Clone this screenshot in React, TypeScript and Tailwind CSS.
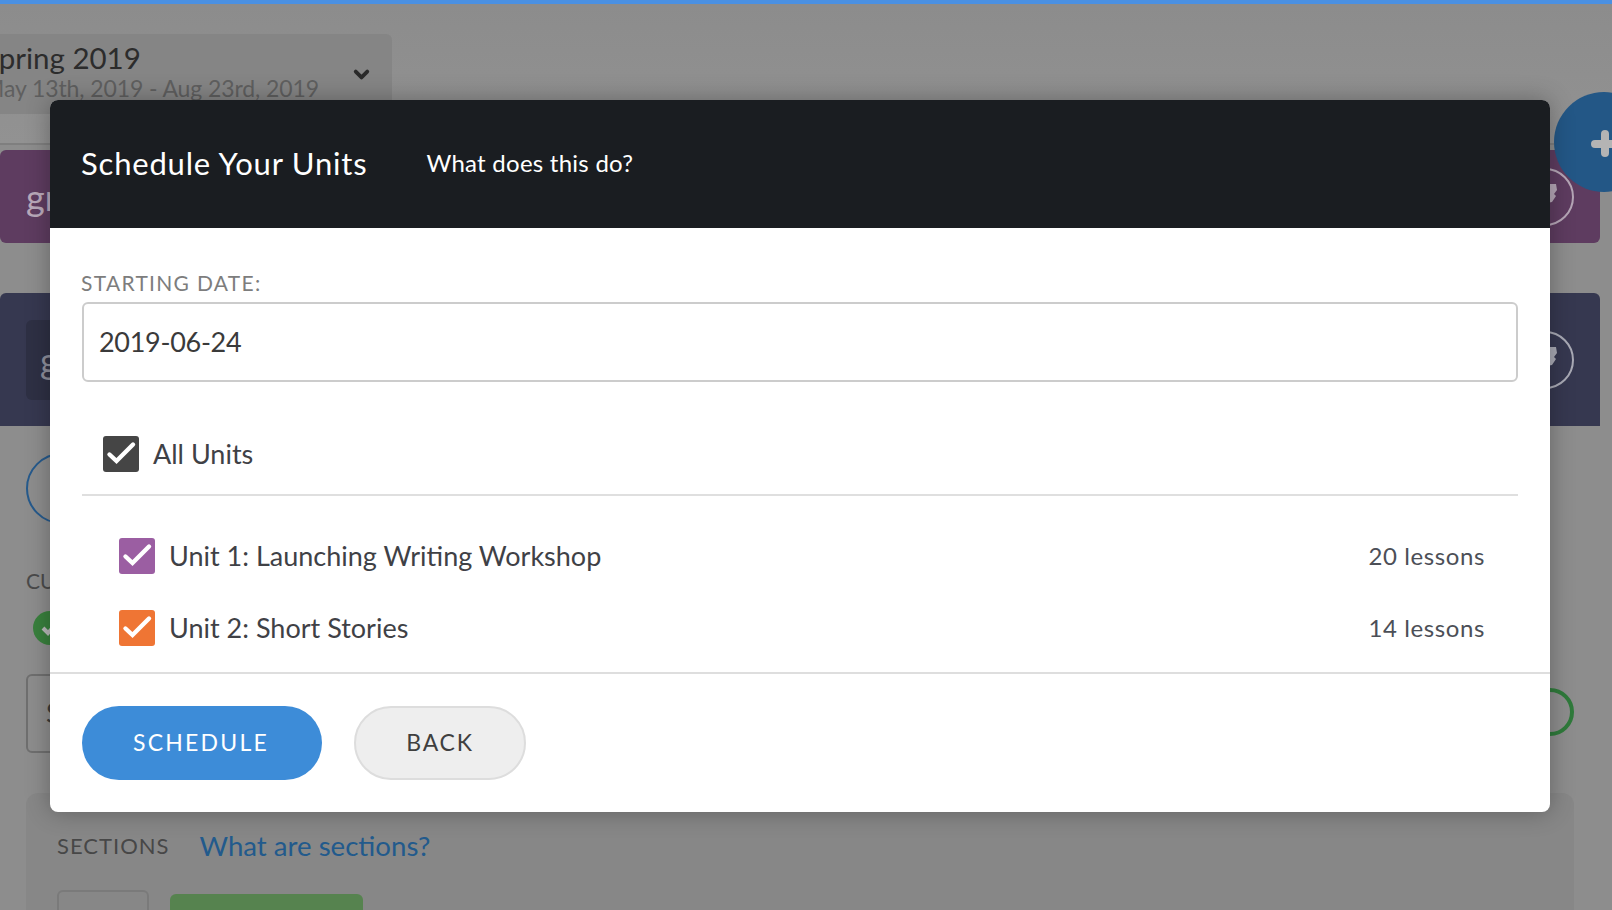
import React from 'react'
import { ChevronDown } from 'lucide-react'

const font = { fontFamily: '"Lato", "Open Sans", sans-serif' }

const Box = ({ color }: { color: string }) => (
  <span className={`block h-[36px] w-[36px] shrink-0 rounded-[3px] ${color}`}>
    <svg width="36" height="36" viewBox="0 0 36 36" fill="none">
      <path d="M6.5 18.5 L13.5 25 L30 8.5" stroke="white" strokeWidth="4.4" strokeLinecap="round" />
    </svg>
  </span>
)

const UnitRow = ({ name, count, color }: { name: string; count: string; color: string }) => (
  <div className="flex h-[36px] items-center pl-[37px] pr-[33px]">
    <Box color={color} />
    <span className="ml-[14px] text-[27px] text-[#3f4146]">{name}</span>
    <span className="ml-auto text-[24px] tracking-[0.6px] text-[#4c4f57]">{count}</span>
  </div>
)

const PinCircle = ({ border, fill }: { border: string; fill: string }) => (
  <span className={`flex h-[58px] w-[58px] items-center justify-center rounded-full border-2 ${border}`}>
    <svg width="26" height="26" viewBox="0 0 26 26" className={fill}>
      <path d="M10 0 L24 0 L25 6 L22 10 L24 12 L20 18 L10 20 Z" fill="currentColor" />
    </svg>
  </span>
)

const Background = () => (
  <div className="flex h-[910px] flex-col bg-[#8d8d8d]">
    <div className="h-[4px] shrink-0 bg-[#4a90e2]" />
    <div className="h-[141px] shrink-0 border-b-2 border-[#7f7f7f] bg-gradient-to-b from-[#8c8c8c] to-[#929292] pt-[30px]">
      <div className="flex h-[80px] w-[392px] items-center justify-between rounded-r-md bg-[#858585] pr-[19px]">
        <div className="ml-[-17px] mt-[-6px] whitespace-nowrap">
          <div className="text-[29.5px] leading-[34px] text-[#2c2c2c]">Spring 2019</div>
          <div className="text-[23px] leading-[26px] tracking-[-0.1px] text-[#5f5f5f]">May 13th, 2019 - Aug 23rd, 2019</div>
        </div>
        <ChevronDown size={23} strokeWidth={4} className="text-[#2a2a2a]" />
      </div>
    </div>
    <div className="mt-[5px] flex h-[93px] w-[1600px] shrink-0 items-center justify-between rounded-b-md rounded-tl-md bg-[#5e3c60] pl-[26px] pr-[26px]">
      <span className="text-[36px] text-[#b9a9ba]">gr</span>
      <PinCircle border="border-[#b5a6b6]" fill="text-[#b5a6b6]" />
    </div>
    <div className="mt-[50px] flex h-[133px] w-[1600px] shrink-0 items-center justify-between rounded-t-md bg-[#363850] pl-[26px] pr-[26px]">
      <div className="flex h-[80px] w-[60px] items-center rounded-md bg-[#2e3044] pl-[14px]">
        <span className="text-[36px] text-[#8d8e9b]">g</span>
      </div>
      <PinCircle border="border-[#a9aab5]" fill="text-[#a9aab5]" />
    </div>
    <div className="w-[1574px] flex-1 pl-[26px]">
      <div className="mt-[27px] h-[71px] w-[71px] rounded-full border-2 border-[#265a8c]" />
      <div className="mt-[45px] text-[21px] leading-[24px] text-[#4a4a4a]">CU</div>
      <div className="ml-[7px] mt-[18px] flex h-[34px] w-[34px] items-center justify-center rounded-full bg-[#39803d]">
        <svg width="22" height="22" viewBox="0 0 22 22" fill="none">
          <path d="M4 11 L9 16 L18 6" stroke="#b9b9b9" strokeWidth="4" />
        </svg>
      </div>
      <div className="mt-[29px] flex items-start justify-between">
        <div className="flex h-[79px] w-[60px] items-center rounded-md border-2 border-[#6f6f6f] pl-[18px] text-[27px] text-[#3a3a3a]">
          S
        </div>
        <div className="mt-[14px] h-[48px] w-[48px] rounded-full border-[4px] border-[#2f7a3b]" />
      </div>
      <div className="mt-[40px] h-[140px] rounded-t-xl bg-[#878787] pl-[31px] pt-[32px]">
        <div className="flex items-center">
          <span className="text-[22px] tracking-[1px] text-[#474747]">SECTIONS</span>
          <span className="ml-[30px] text-[27.6px] text-[#225a8c]">What are sections?</span>
        </div>
        <div className="mt-[24px] flex items-start">
          <div className="h-[40px] w-[92px] rounded-md border-2 border-[#7a7a7a]" />
          <div className="ml-[21px] mt-[4px] h-[40px] w-[193px] rounded-md bg-[#56834f]" />
        </div>
      </div>
    </div>
  </div>
)

export default function App() {
  return (
    <div className="relative h-[910px] w-[1612px] overflow-hidden" style={font}>
      <Background />

      <button className="absolute left-[1554px] top-[92px] h-[100px] w-[100px] rounded-full bg-[#235786]">
        <span className="absolute left-[37px] top-[48px] h-[8px] w-[27px] rounded-sm bg-[#b4b4b4]" />
        <span className="absolute left-[47px] top-[38px] h-[27px] w-[8px] rounded-sm bg-[#b4b4b4]" />
      </button>

      <div className="absolute left-[50px] top-[100px] w-[1500px] overflow-hidden rounded-lg bg-white shadow-[0_0_24px_rgba(0,0,0,0.3)]">
        <div className="flex h-[128px] items-center bg-[#1a1d21] pl-[31px] pb-[2px] text-white">
          <span className="text-[31px] tracking-[0.8px]">Schedule Your Units</span>
          <span className="ml-[59px] text-[24px] tracking-[0.25px]">What does this do?</span>
        </div>

        <div className="px-[32px] pt-[43px]">
          <div className="ml-[-1px] text-[21px] leading-[24px] tracking-[1.3px] text-[#7d7d7d]">STARTING DATE:</div>
          <div className="mt-[7px] flex h-[80px] items-center rounded-md border-2 border-[#cccccc] pl-[15px] text-[27px] tracking-[-0.3px] text-[#3a3a3a]">
            2019-06-24
          </div>
          <div className="flex h-[114px] items-start border-b-2 border-[#dfdfdf] pl-[21px] pt-[54px]">
            <Box color="bg-[#454545]" />
            <span className="ml-[14px] text-[27px] leading-[36px] text-[#3f4146]">All Units</span>
          </div>
          <div className="mt-[42px] flex flex-col gap-[36px]">
            <UnitRow name="Unit 1: Launching Writing Workshop" count="20 lessons" color="bg-[#9b5ea2]" />
            <UnitRow name="Unit 2: Short Stories" count="14 lessons" color="bg-[#ef7534]" />
          </div>
        </div>

        <div className="mt-[26px] flex h-[140px] items-start gap-[32px] border-t-2 border-[#dedede] px-[32px] pt-[32px]">
          <button className="h-[74px] w-[240px] rounded-full bg-[#3d8cd8] pb-[2px] pr-[2px] text-[23px] tracking-[2.2px] text-white">
            SCHEDULE
          </button>
          <button className="h-[74px] w-[172px] rounded-full border-2 border-[#dddddd] bg-[#eeeeee] pb-[2px] text-[23px] tracking-[1.8px] text-[#3f3f3f]">
            BACK
          </button>
        </div>
      </div>
    </div>
  )
}
